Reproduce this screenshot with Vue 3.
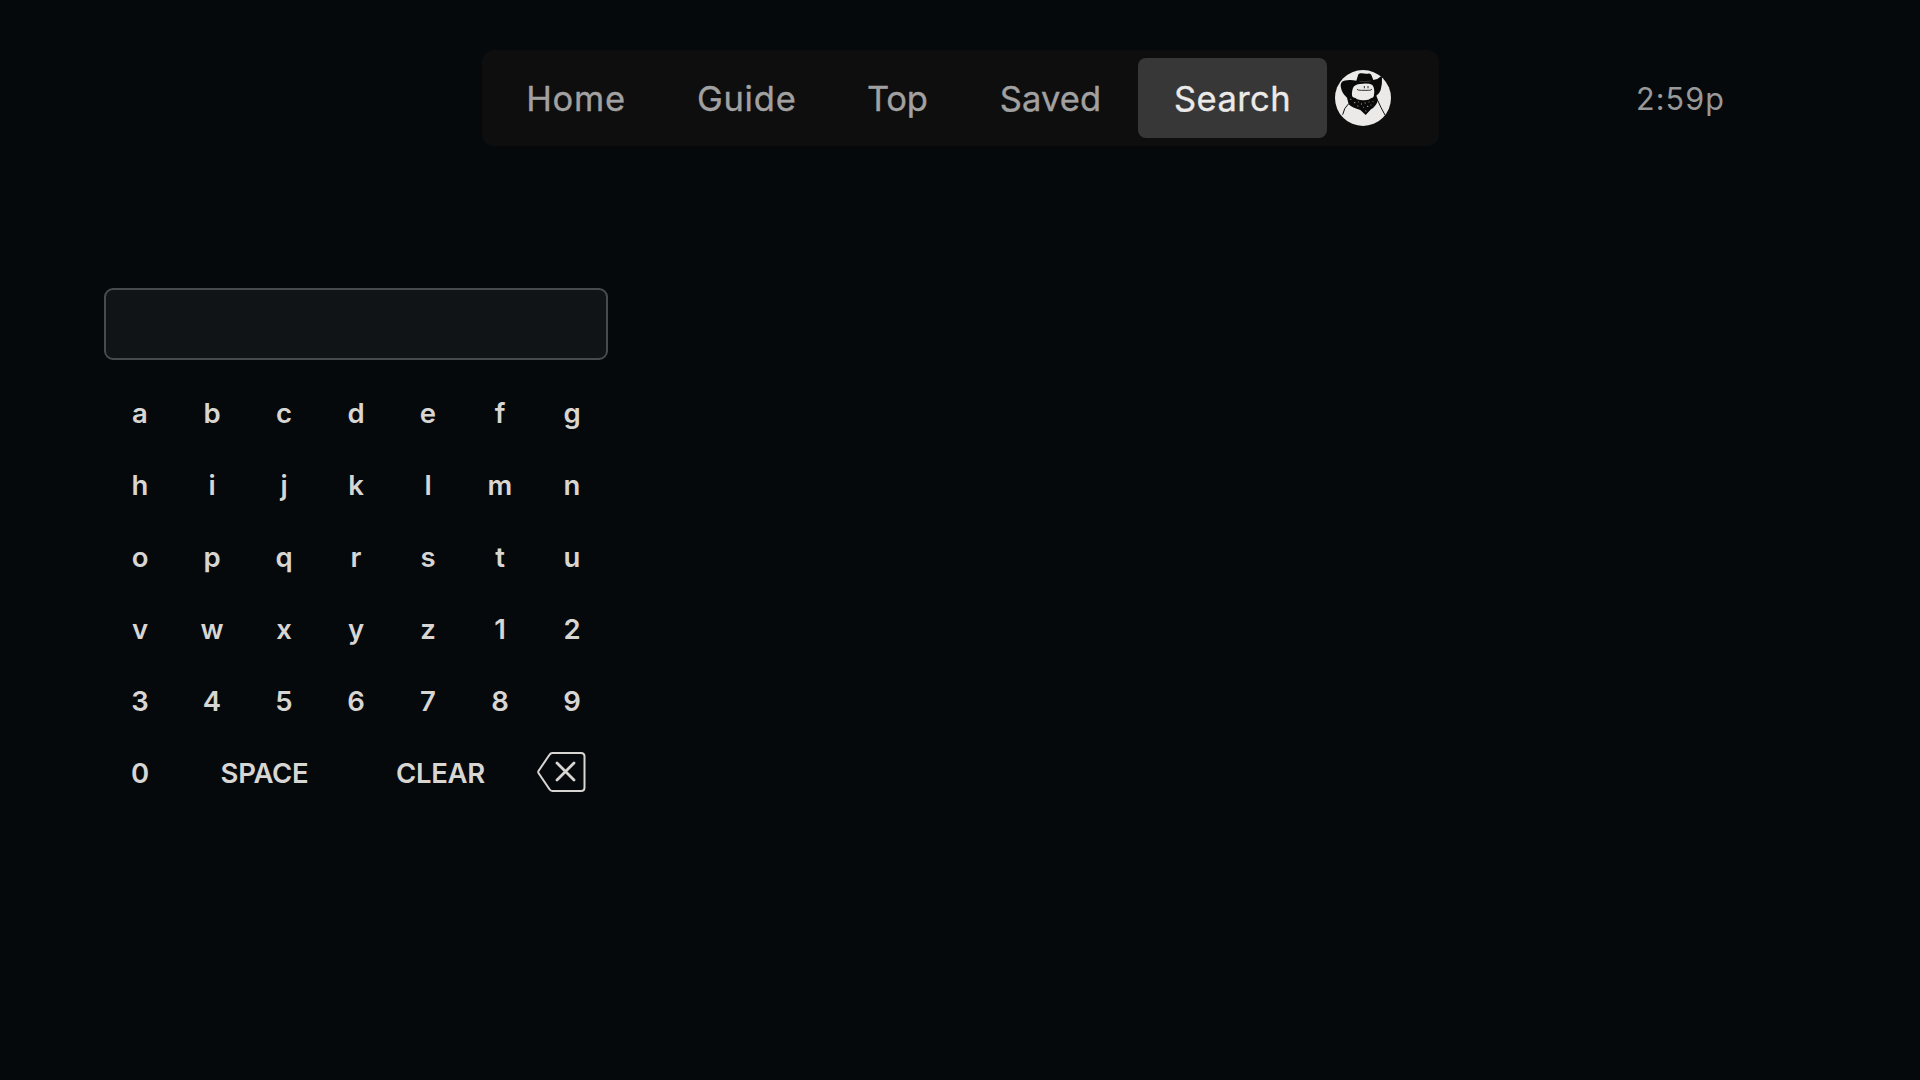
<script setup>
const navItems = [
  { label: 'Home', name: 'home' },
  { label: 'Guide', name: 'guide' },
  { label: 'Top', name: 'top' },
  { label: 'Saved', name: 'saved' },
  { label: 'Search', name: 'search' },
]
const keys = 'abcdefghijklmnopqrstuvwxyz123456789'.split('')
</script>

<template>
  <div class="screen">
    <header class="header">
      <nav class="nav">
        <a v-for="item in navItems" :key="item.name" class="nav-item" :class="item.name"><span>{{ item.label }}</span></a>
        <svg class="avatar" viewBox="0 0 168 168">
          <circle cx="84" cy="84" r="84" fill="#ebeae8" />
          <path
            fill="#090909"
            d="M64 32 L70 13 Q74 8 81 10 Q90 12 98 11 Q106 10 109 15 L115 30 Q128 29 136 20 L141 22 Q142 45 137 60 Q133 72 124 77 L129 90 Q124 109 108 118 L92 135 L76 120 Q52 114 41 103 L36 83 Q20 70 17 49 Q16 36 27 32 Q45 28 64 32 Z"
          />
          <path
            fill="#ebeae8"
            d="M57 49 Q62 42 84 41 Q104 40 112 45 Q120 55 117 74 Q117 83 109 84 Q101 92 84 91 Q66 90 62 84 Q52 84 51 76 Q50 59 57 49 Z"
          />
          <path d="M73 34 Q90 36 107 33" fill="none" stroke="#77746f" stroke-width="1.3" />
          <path d="M66 58 Q68 61 80 61 H101 Q109 61 111 57" fill="none" stroke="#111" stroke-width="2.5" />
          <path d="M88 48 V55 M99 48 V55" stroke="#333" stroke-width="3" />
          <path d="M41 101 Q27 113 23 134 M128 91 Q137 112 150 135" fill="none" stroke="#111" stroke-width="3" />
          <path
            d="M46 88 h3 M57 98 h4 M70 96 h2 M78 102 h3 M67 108 h3 M89 99 h3 M101 96 h2 M113 95 h2 M84 112 h2 M96 109 h4 M107 105 h2 M91 123 h3"
            stroke="#aaa"
            stroke-width="3"
          />
        </svg>
      </nav>
      <time class="clock">2:59p</time>
    </header>

    <main class="search-panel">
      <div class="search-field"></div>
      <div class="keyboard">
        <button v-for="key in keys" :key="key" class="key">{{ key }}</button>
      </div>
      <div class="actions">
        <button class="key zero">0</button>
        <button class="key wide space"><span>SPACE</span></button>
        <button class="key wide clear"><span>CLEAR</span></button>
        <button class="key delete" aria-label="Backspace">
          <svg width="50" height="42" viewBox="0 0 50 42" fill="none" stroke="#d8d6d3">
            <path
              d="M15.5 2 H44 Q47.5 2 47.5 5.5 V36.5 Q47.5 40 44 40 H15.5 Q13.5 40 12.3 38 L1.5 22 Q1 21 1.5 20 L12.3 4 Q13.5 2 15.5 2 Z"
              stroke-width="2"
            />
            <path d="M20 12 L37 29 M37 12 L20 29" stroke-width="2.8" stroke-linecap="round" />
          </svg>
        </button>
      </div>
    </main>
  </div>
</template>

<style>
body {
  margin: 0;
  background: #05090c;
}
</style>

<style scoped>
.screen {
  box-sizing: border-box;
  width: 1920px;
  height: 1080px;
  padding-top: 50px;
  overflow: hidden;
  background: #05090c;
  font-family: Inter, 'Liberation Sans', sans-serif;
}

.header {
  display: flex;
  align-items: center;
  height: 96px;
  padding-left: 482px;
}

.nav {
  box-sizing: border-box;
  display: flex;
  align-items: center;
  width: 957px;
  height: 96px;
  padding: 8px;
  border-radius: 12px;
  background: #0e0e0e;
}

.nav-item {
  display: flex;
  flex: none;
  align-items: center;
  justify-content: center;
  height: 80px;
  border-radius: 8px;
  color: #a1a1a1;
  font-size: 34.5px;
  font-weight: 400;
  white-space: nowrap;
  -webkit-text-stroke: 0.35px currentColor;
}

.home { width: 172px; letter-spacing: 0.7px; }
.guide { width: 169.5px; letter-spacing: 0.8px; }
.top { width: 131.5px; letter-spacing: -0.3px; }
.saved { width: 175px; letter-spacing: 0.1px; }

.search {
  width: 189px;
  background: #373737;
  color: #ebeae8;
  letter-spacing: 0.4px;
}

.avatar {
  flex: none;
  width: 56px;
  height: 56px;
  margin-left: 8px;
}

.clock {
  margin-left: 197px;
  color: #999;
  font-size: 30.5px;
  font-weight: 400;
  letter-spacing: 1.1px;
}

.search-panel {
  width: 504px;
  margin: 142px 0 0 104px;
}

.search-field {
  box-sizing: border-box;
  height: 72px;
  border: 2px solid #484b4c;
  border-radius: 9px;
  background: #101416;
}

.keyboard {
  display: grid;
  grid-template-columns: repeat(7, 72px);
  grid-auto-rows: 72px;
  margin-top: 17px;
}

.key {
  display: flex;
  align-items: center;
  justify-content: center;
  width: 72px;
  height: 72px;
  padding: 0;
  border: 0;
  background: none;
  color: #d8d6d3;
  font-family: inherit;
  font-size: 27.5px;
  font-weight: 600;
}

.actions {
  display: flex;
}

.wide {
  width: 176px;
  padding-left: 1px;
  letter-spacing: -0.3px;
}

.delete {
  padding: 0 5px 2px 0;
}
</style>
